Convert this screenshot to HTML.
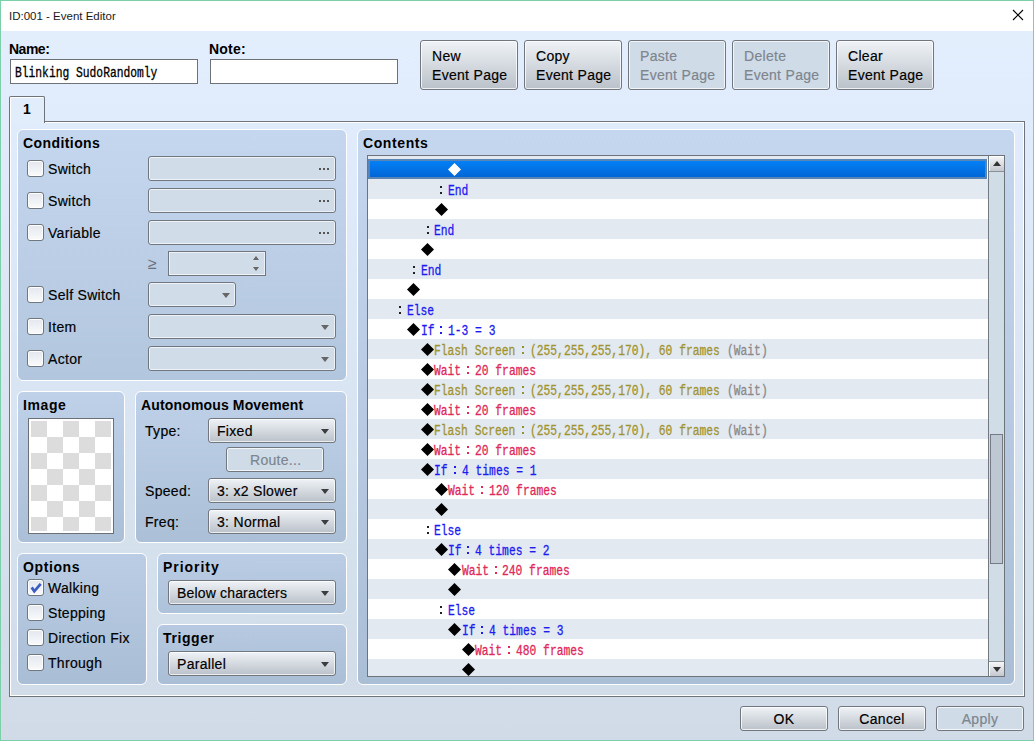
<!DOCTYPE html>
<html><head><meta charset="utf-8">
<style>
*{box-sizing:border-box;margin:0;padding:0}
html,body{width:1034px;height:741px;overflow:hidden;background:#fff}
body{font-family:"Liberation Sans",sans-serif;font-size:14px;color:#000;position:relative}
.a{position:absolute}
#win{position:absolute;left:0;top:0;width:1034px;height:741px;border:1px solid #7BCFA9;background:#fff}
#title{position:absolute;left:8px;top:9px;font-size:11.5px;color:#1a1a1a}
#body{position:absolute;left:1px;top:31px;width:1032px;height:709px;background:linear-gradient(#E3EEFD,#E0ECFC 12%,#DAE5F3 50%,#D0DBE7)}
.lbl{position:absolute;font-weight:bold;font-size:14px;line-height:16px;letter-spacing:0.6px}
.txt{position:absolute;font-size:14px;line-height:16px;letter-spacing:0.3px;-webkit-text-stroke:0.18px currentColor}
.input{position:absolute;background:#fff;border:1px solid #6E7175}
.btn{position:absolute;border:1px solid #72777F;border-radius:3px;background:linear-gradient(#EFF3F7,#BBC1C9);box-shadow:inset 0 0 0 1px rgba(255,255,255,.75)}
.btn.dis{background:#CFDBE7;border-color:#72777F;color:#7D858E}
.grp{position:absolute;border:1px solid #fff;border-radius:6px}
.panel{position:absolute;border:1px solid #6F747A;box-shadow:inset 1px 1px 0 #fff, inset -1px -1px 0 #fff}
.fld{position:absolute;border:1px solid #707780;border-radius:3px;background:#D0DCE7;box-shadow:inset 0 0 0 1px #EEF2F6}
.cmb{position:absolute;border:1px solid #72777F;border-radius:3px;background:linear-gradient(#EFF3F7,#BBC1C9);box-shadow:inset 0 0 0 1px rgba(255,255,255,.7)}
.arr{position:absolute;width:0;height:0;border-left:4px solid transparent;border-right:4px solid transparent;border-top:5px solid #3A3D42}
.cb{position:absolute;width:17px;height:17px;border:1.5px solid #6F7780;border-radius:3px;background:linear-gradient(#E3E8EE,#F9FAFB);box-shadow:inset 0 0 0 1px #fff}
.dots{position:absolute;width:2px;height:2px;background:#555;box-shadow:4px 0 0 #555,8px 0 0 #555}
.row{position:absolute;left:368px;width:620px;height:20px}
.g{background:#E3E9F0}
.m{position:absolute;font-family:"Liberation Mono",monospace;font-size:14px;line-height:20px;white-space:pre;transform-origin:0 0;transform:scaleX(0.807);-webkit-text-stroke:0.3px currentColor}
.bl{color:#1C1CF0}.ol{color:#A09430}.rd{color:#E0285A}.gy{color:#8A8A8A}
</style></head><body>
<div id="win">
<div id="title">ID:001 - Event Editor</div>
<svg class="a" style="left:1011px;top:8px" width="12" height="12" viewBox="0 0 12 12"><path d="M1 1L11 11M11 1L1 11" stroke="#000" stroke-width="1.1"/></svg>
</div>
<div id="body"></div>

<!-- Name / Note -->
<div class="lbl" style="left:9px;top:41px;letter-spacing:-0.5px">Name:</div>
<div class="input" style="left:10px;top:59px;width:188px;height:25px"></div>
<div class="m" style="left:15px;top:63px;color:#000">Blinking SudoRandomly</div>
<div class="lbl" style="left:209px;top:41px;letter-spacing:0.2px">Note:</div>
<div class="input" style="left:210px;top:59px;width:188px;height:25px"></div>

<!-- top buttons -->
<div class="btn" style="left:420px;top:40px;width:98px;height:50px"></div>
<div class="txt" style="left:432px;top:47px;line-height:19px">New<br>Event Page</div>
<div class="btn" style="left:524px;top:40px;width:98px;height:50px"></div>
<div class="txt" style="left:536px;top:47px;line-height:19px">Copy<br>Event Page</div>
<div class="btn dis" style="left:628px;top:40px;width:98px;height:50px"></div>
<div class="txt" style="left:640px;top:47px;line-height:19px;color:#7D858E">Paste<br>Event Page</div>
<div class="btn dis" style="left:732px;top:40px;width:98px;height:50px"></div>
<div class="txt" style="left:744px;top:47px;line-height:19px;color:#7D858E">Delete<br>Event Page</div>
<div class="btn" style="left:836px;top:40px;width:98px;height:50px"></div>
<div class="txt" style="left:848px;top:47px;line-height:19px">Clear<br>Event Page</div>

<!-- tab -->
<div class="a" style="left:9px;top:121px;width:1016px;height:576px;border:1px solid #6F747A;box-shadow:inset 0 0 0 1px #fff"></div>
<div class="a" style="left:9px;top:96px;width:36px;height:27px;border:1px solid #6F747A;border-bottom:none;border-radius:2px 2px 0 0;background:#E2EDFB;box-shadow:inset 1px 1px 0 #fff"></div>
<div class="lbl" style="left:23px;top:101px">1</div>

<!-- Conditions -->
<div class="grp" style="left:17px;top:129px;width:330px;height:252px;background:linear-gradient(#C5D7EE,#B2C6DD)"></div>
<div class="lbl" style="left:23px;top:135px;letter-spacing:0.42px">Conditions</div>
<div class="cb" style="left:27px;top:160px"></div><div class="txt" style="left:48px;top:161px">Switch</div>
<div class="cb" style="left:27px;top:192px"></div><div class="txt" style="left:48px;top:193px">Switch</div>
<div class="cb" style="left:27px;top:224px"></div><div class="txt" style="left:48px;top:225px">Variable</div>
<div class="cb" style="left:27px;top:286px"></div><div class="txt" style="left:48px;top:287px">Self Switch</div>
<div class="cb" style="left:27px;top:318px"></div><div class="txt" style="left:48px;top:319px">Item</div>
<div class="cb" style="left:27px;top:350px"></div><div class="txt" style="left:48px;top:351px">Actor</div>
<div class="fld" style="left:148px;top:156px;width:188px;height:25px"></div><div class="dots" style="left:319px;top:168px"></div>
<div class="fld" style="left:148px;top:188px;width:188px;height:25px"></div><div class="dots" style="left:319px;top:200px"></div>
<div class="fld" style="left:148px;top:220px;width:188px;height:25px"></div><div class="dots" style="left:319px;top:232px"></div>
<div class="txt" style="left:148px;top:256px;font-size:16px;color:#6A7078;-webkit-text-stroke:0">≥</div>
<div class="fld" style="left:168px;top:251px;width:98px;height:25px;border-radius:0"></div>
<div class="a" style="left:253px;top:256px;width:0;height:0;border-left:3.5px solid transparent;border-right:3.5px solid transparent;border-bottom:4px solid #666"></div>
<div class="a" style="left:253px;top:267px;width:0;height:0;border-left:3.5px solid transparent;border-right:3.5px solid transparent;border-top:4px solid #666"></div>
<div class="fld" style="left:148px;top:282px;width:88px;height:25px"></div><div class="arr" style="left:222px;top:293px;border-top-color:#666"></div>
<div class="fld" style="left:148px;top:314px;width:188px;height:25px"></div><div class="arr" style="left:321px;top:325px;border-top-color:#666"></div>
<div class="fld" style="left:148px;top:346px;width:188px;height:25px"></div><div class="arr" style="left:321px;top:357px;border-top-color:#666"></div>

<!-- Image -->
<div class="grp" style="left:17px;top:391px;width:108px;height:152px;background:linear-gradient(#BED1E8,#ABBFD7)"></div>
<div class="lbl" style="left:23px;top:397px">Image</div>
<div class="a" style="left:28px;top:418px;width:86px;height:116px;border:1px solid #6B7077;background:#fff"></div>
<div class="a" style="left:31px;top:421px;width:80px;height:110px;background:conic-gradient(#fff 0 25%,#DCDCDC 0 50%,#fff 0 75%,#DCDCDC 0);background-size:32px 32px"></div>

<!-- Autonomous movement -->
<div class="grp" style="left:135px;top:391px;width:212px;height:152px;background:linear-gradient(#BED1E8,#ABBFD7)"></div>
<div class="lbl" style="left:141px;top:397px;letter-spacing:0.15px">Autonomous Movement</div>
<div class="txt" style="left:145px;top:423px">Type:</div>
<div class="cmb" style="left:208px;top:418px;width:128px;height:25px"></div>
<div class="txt" style="left:217px;top:423px">Fixed</div><div class="arr" style="left:321px;top:429px"></div>
<div class="btn dis" style="left:226px;top:447px;width:98px;height:25px;border-radius:3px"></div>
<div class="txt" style="left:250px;top:452px;color:#7D858E">Route...</div>
<div class="txt" style="left:145px;top:483px">Speed:</div>
<div class="cmb" style="left:208px;top:478px;width:128px;height:25px"></div>
<div class="txt" style="left:217px;top:483px">3: x2 Slower</div><div class="arr" style="left:321px;top:489px"></div>
<div class="txt" style="left:145px;top:514px">Freq:</div>
<div class="cmb" style="left:208px;top:509px;width:128px;height:25px"></div>
<div class="txt" style="left:217px;top:514px">3: Normal</div><div class="arr" style="left:321px;top:520px"></div>

<!-- Options -->
<div class="grp" style="left:17px;top:553px;width:130px;height:132px;background:linear-gradient(#BACDE4,#A9BDD5)"></div>
<div class="lbl" style="left:23px;top:559px">Options</div>
<div class="cb" style="left:27px;top:579px"></div>
<svg class="a" style="left:29px;top:581px" width="14" height="14" viewBox="0 0 14 14"><path d="M2.7 6.4L5.3 10.3L11.7 2.8" fill="none" stroke="#3C5EC2" stroke-width="2.8"/></svg>
<div class="txt" style="left:48px;top:580px">Walking</div>
<div class="cb" style="left:27px;top:604px"></div><div class="txt" style="left:48px;top:605px">Stepping</div>
<div class="cb" style="left:27px;top:629px"></div><div class="txt" style="left:48px;top:630px">Direction Fix</div>
<div class="cb" style="left:27px;top:654px"></div><div class="txt" style="left:48px;top:655px">Through</div>

<!-- Priority -->
<div class="grp" style="left:157px;top:553px;width:190px;height:61px;background:linear-gradient(#BACDE4,#AEC2D9)"></div>
<div class="lbl" style="left:163px;top:559px;letter-spacing:0.95px">Priority</div>
<div class="cmb" style="left:168px;top:580px;width:168px;height:25px"></div>
<div class="txt" style="left:177px;top:585px;letter-spacing:0.17px">Below characters</div><div class="arr" style="left:321px;top:591px"></div>

<!-- Trigger -->
<div class="grp" style="left:157px;top:624px;width:190px;height:61px;background:linear-gradient(#B6C9E0,#AABED6)"></div>
<div class="lbl" style="left:163px;top:630px">Trigger</div>
<div class="cmb" style="left:168px;top:651px;width:168px;height:25px"></div>
<div class="txt" style="left:177px;top:656px">Parallel</div><div class="arr" style="left:321px;top:662px"></div>

<!-- Contents -->
<div class="grp" style="left:357px;top:129px;width:658px;height:556px;background:linear-gradient(#C5D7EE,#AABED6)"></div>
<div class="lbl" style="left:363px;top:135px">Contents</div>
<div class="a" style="left:367px;top:155px;width:638px;height:522px;border:1px solid #6E737A;background:#fff;overflow:hidden">
<div class="a" style="left:0;top:0;width:620px;height:520px;overflow:hidden">
<div class="a g" style="left:0;top:-17px;width:620px;height:20px"></div>
<div class="a" style="left:0;top:3px;width:619px;height:20px;border:2px solid #5A84B4;background:linear-gradient(#0480F6,#0066D6)"></div>
<svg class="a" style="left:80.20px;top:7px" width="13" height="13" viewBox="0 0 13 13"><path d="M6.5 0L13 6.5L6.5 13L0 6.5Z" fill="#fff"/></svg>
<div class="a g" style="left:0;top:23px;width:620px;height:20px"></div>
<div class="a" style="left:72.10px;top:30px;width:2px;height:2px;background:#202020;box-shadow:0 6px 0 #202020"></div>
<div class="m bl" style="left:79.90px;top:25px">End</div>
<svg class="a" style="left:66.60px;top:47px" width="13" height="13" viewBox="0 0 13 13"><path d="M6.5 0L13 6.5L6.5 13L0 6.5Z" fill="#000"/></svg>
<div class="a g" style="left:0;top:63px;width:620px;height:20px"></div>
<div class="a" style="left:58.50px;top:70px;width:2px;height:2px;background:#202020;box-shadow:0 6px 0 #202020"></div>
<div class="m bl" style="left:66.30px;top:65px">End</div>
<svg class="a" style="left:53.00px;top:87px" width="13" height="13" viewBox="0 0 13 13"><path d="M6.5 0L13 6.5L6.5 13L0 6.5Z" fill="#000"/></svg>
<div class="a g" style="left:0;top:103px;width:620px;height:20px"></div>
<div class="a" style="left:44.90px;top:110px;width:2px;height:2px;background:#202020;box-shadow:0 6px 0 #202020"></div>
<div class="m bl" style="left:52.70px;top:105px">End</div>
<svg class="a" style="left:39.40px;top:127px" width="13" height="13" viewBox="0 0 13 13"><path d="M6.5 0L13 6.5L6.5 13L0 6.5Z" fill="#000"/></svg>
<div class="a g" style="left:0;top:143px;width:620px;height:20px"></div>
<div class="a" style="left:31.30px;top:150px;width:2px;height:2px;background:#202020;box-shadow:0 6px 0 #202020"></div>
<div class="m bl" style="left:39.10px;top:145px">Else</div>
<svg class="a" style="left:39.40px;top:167px" width="13" height="13" viewBox="0 0 13 13"><path d="M6.5 0L13 6.5L6.5 13L0 6.5Z" fill="#000"/></svg>
<div class="m bl" style="left:52.70px;top:165px">If</div>
<div class="a" style="left:72.10px;top:170px;width:2px;height:2px;background:#1C1CF0;box-shadow:0 6px 0 #1C1CF0"></div>
<div class="m bl" style="left:79.90px;top:165px">1-3 = 3</div>
<div class="a g" style="left:0;top:183px;width:620px;height:20px"></div>
<svg class="a" style="left:53.00px;top:187px" width="13" height="13" viewBox="0 0 13 13"><path d="M6.5 0L13 6.5L6.5 13L0 6.5Z" fill="#000"/></svg>
<div class="m ol" style="left:66.30px;top:185px">Flash Screen</div>
<div class="a" style="left:153.70px;top:190px;width:2px;height:2px;background:#8E9629;box-shadow:0 6px 0 #8E9629"></div>
<div class="m ol" style="left:161.50px;top:185px">(255,255,255,170), 60 frames </div>
<div class="m gy" style="left:358.70px;top:185px">(Wait)</div>
<svg class="a" style="left:53.00px;top:207px" width="13" height="13" viewBox="0 0 13 13"><path d="M6.5 0L13 6.5L6.5 13L0 6.5Z" fill="#000"/></svg>
<div class="m rd" style="left:66.30px;top:205px">Wait</div>
<div class="a" style="left:99.30px;top:210px;width:2px;height:2px;background:#E0285A;box-shadow:0 6px 0 #E0285A"></div>
<div class="m rd" style="left:107.10px;top:205px">20 frames</div>
<div class="a g" style="left:0;top:223px;width:620px;height:20px"></div>
<svg class="a" style="left:53.00px;top:227px" width="13" height="13" viewBox="0 0 13 13"><path d="M6.5 0L13 6.5L6.5 13L0 6.5Z" fill="#000"/></svg>
<div class="m ol" style="left:66.30px;top:225px">Flash Screen</div>
<div class="a" style="left:153.70px;top:230px;width:2px;height:2px;background:#8E9629;box-shadow:0 6px 0 #8E9629"></div>
<div class="m ol" style="left:161.50px;top:225px">(255,255,255,170), 60 frames </div>
<div class="m gy" style="left:358.70px;top:225px">(Wait)</div>
<svg class="a" style="left:53.00px;top:247px" width="13" height="13" viewBox="0 0 13 13"><path d="M6.5 0L13 6.5L6.5 13L0 6.5Z" fill="#000"/></svg>
<div class="m rd" style="left:66.30px;top:245px">Wait</div>
<div class="a" style="left:99.30px;top:250px;width:2px;height:2px;background:#E0285A;box-shadow:0 6px 0 #E0285A"></div>
<div class="m rd" style="left:107.10px;top:245px">20 frames</div>
<div class="a g" style="left:0;top:263px;width:620px;height:20px"></div>
<svg class="a" style="left:53.00px;top:267px" width="13" height="13" viewBox="0 0 13 13"><path d="M6.5 0L13 6.5L6.5 13L0 6.5Z" fill="#000"/></svg>
<div class="m ol" style="left:66.30px;top:265px">Flash Screen</div>
<div class="a" style="left:153.70px;top:270px;width:2px;height:2px;background:#8E9629;box-shadow:0 6px 0 #8E9629"></div>
<div class="m ol" style="left:161.50px;top:265px">(255,255,255,170), 60 frames </div>
<div class="m gy" style="left:358.70px;top:265px">(Wait)</div>
<svg class="a" style="left:53.00px;top:287px" width="13" height="13" viewBox="0 0 13 13"><path d="M6.5 0L13 6.5L6.5 13L0 6.5Z" fill="#000"/></svg>
<div class="m rd" style="left:66.30px;top:285px">Wait</div>
<div class="a" style="left:99.30px;top:290px;width:2px;height:2px;background:#E0285A;box-shadow:0 6px 0 #E0285A"></div>
<div class="m rd" style="left:107.10px;top:285px">20 frames</div>
<div class="a g" style="left:0;top:303px;width:620px;height:20px"></div>
<svg class="a" style="left:53.00px;top:307px" width="13" height="13" viewBox="0 0 13 13"><path d="M6.5 0L13 6.5L6.5 13L0 6.5Z" fill="#000"/></svg>
<div class="m bl" style="left:66.30px;top:305px">If</div>
<div class="a" style="left:85.70px;top:310px;width:2px;height:2px;background:#1C1CF0;box-shadow:0 6px 0 #1C1CF0"></div>
<div class="m bl" style="left:93.50px;top:305px">4 times = 1</div>
<svg class="a" style="left:66.60px;top:327px" width="13" height="13" viewBox="0 0 13 13"><path d="M6.5 0L13 6.5L6.5 13L0 6.5Z" fill="#000"/></svg>
<div class="m rd" style="left:79.90px;top:325px">Wait</div>
<div class="a" style="left:112.90px;top:330px;width:2px;height:2px;background:#E0285A;box-shadow:0 6px 0 #E0285A"></div>
<div class="m rd" style="left:120.70px;top:325px">120 frames</div>
<div class="a g" style="left:0;top:343px;width:620px;height:20px"></div>
<svg class="a" style="left:66.60px;top:347px" width="13" height="13" viewBox="0 0 13 13"><path d="M6.5 0L13 6.5L6.5 13L0 6.5Z" fill="#000"/></svg>
<div class="a" style="left:58.50px;top:370px;width:2px;height:2px;background:#202020;box-shadow:0 6px 0 #202020"></div>
<div class="m bl" style="left:66.30px;top:365px">Else</div>
<div class="a g" style="left:0;top:383px;width:620px;height:20px"></div>
<svg class="a" style="left:66.60px;top:387px" width="13" height="13" viewBox="0 0 13 13"><path d="M6.5 0L13 6.5L6.5 13L0 6.5Z" fill="#000"/></svg>
<div class="m bl" style="left:79.90px;top:385px">If</div>
<div class="a" style="left:99.30px;top:390px;width:2px;height:2px;background:#1C1CF0;box-shadow:0 6px 0 #1C1CF0"></div>
<div class="m bl" style="left:107.10px;top:385px">4 times = 2</div>
<svg class="a" style="left:80.20px;top:407px" width="13" height="13" viewBox="0 0 13 13"><path d="M6.5 0L13 6.5L6.5 13L0 6.5Z" fill="#000"/></svg>
<div class="m rd" style="left:93.50px;top:405px">Wait</div>
<div class="a" style="left:126.50px;top:410px;width:2px;height:2px;background:#E0285A;box-shadow:0 6px 0 #E0285A"></div>
<div class="m rd" style="left:134.30px;top:405px">240 frames</div>
<div class="a g" style="left:0;top:423px;width:620px;height:20px"></div>
<svg class="a" style="left:80.20px;top:427px" width="13" height="13" viewBox="0 0 13 13"><path d="M6.5 0L13 6.5L6.5 13L0 6.5Z" fill="#000"/></svg>
<div class="a" style="left:72.10px;top:450px;width:2px;height:2px;background:#202020;box-shadow:0 6px 0 #202020"></div>
<div class="m bl" style="left:79.90px;top:445px">Else</div>
<div class="a g" style="left:0;top:463px;width:620px;height:20px"></div>
<svg class="a" style="left:80.20px;top:467px" width="13" height="13" viewBox="0 0 13 13"><path d="M6.5 0L13 6.5L6.5 13L0 6.5Z" fill="#000"/></svg>
<div class="m bl" style="left:93.50px;top:465px">If</div>
<div class="a" style="left:112.90px;top:470px;width:2px;height:2px;background:#1C1CF0;box-shadow:0 6px 0 #1C1CF0"></div>
<div class="m bl" style="left:120.70px;top:465px">4 times = 3</div>
<svg class="a" style="left:93.80px;top:487px" width="13" height="13" viewBox="0 0 13 13"><path d="M6.5 0L13 6.5L6.5 13L0 6.5Z" fill="#000"/></svg>
<div class="m rd" style="left:107.10px;top:485px">Wait</div>
<div class="a" style="left:140.10px;top:490px;width:2px;height:2px;background:#E0285A;box-shadow:0 6px 0 #E0285A"></div>
<div class="m rd" style="left:147.90px;top:485px">480 frames</div>
<div class="a g" style="left:0;top:503px;width:620px;height:20px"></div>
<svg class="a" style="left:93.80px;top:507px" width="13" height="13" viewBox="0 0 13 13"><path d="M6.5 0L13 6.5L6.5 13L0 6.5Z" fill="#000"/></svg>
</div>
<div class="a" style="left:620px;top:0;width:16px;height:520px;background:#D0DCE6;border-left:1px solid #737980"></div>
<div class="a" style="left:621px;top:0;width:15px;height:16px;background:linear-gradient(#F6F7F9,#C3C8CF);border-bottom:1px solid #8A9098;box-shadow:inset 1px 1px 0 #fff"></div>
<div class="a" style="left:624.5px;top:4.5px;width:0;height:0;border-left:4px solid transparent;border-right:4px solid transparent;border-bottom:5px solid #333"></div>
<div class="a" style="left:621px;top:505px;width:15px;height:15px;background:linear-gradient(#F6F7F9,#C3C8CF);border-top:1px solid #8A9098;box-shadow:inset 1px 0 0 #fff"></div>
<div class="a" style="left:624.5px;top:510.5px;width:0;height:0;border-left:4px solid transparent;border-right:4px solid transparent;border-top:5px solid #333"></div>
<div class="a" style="left:622px;top:278px;width:13px;height:130px;background:#BEC8D2;border:1px solid #747B84"></div>
</div>

<!-- bottom buttons -->
<div class="btn" style="left:740px;top:706px;width:88px;height:25px"></div>
<div class="txt" style="left:740px;top:711px;width:88px;text-align:center">OK</div>
<div class="btn" style="left:838px;top:706px;width:88px;height:25px"></div>
<div class="txt" style="left:838px;top:711px;width:88px;text-align:center">Cancel</div>
<div class="btn dis" style="left:936px;top:706px;width:88px;height:25px"></div>
<div class="txt" style="left:936px;top:711px;width:88px;text-align:center;color:#7D858E">Apply</div>

</body></html>
